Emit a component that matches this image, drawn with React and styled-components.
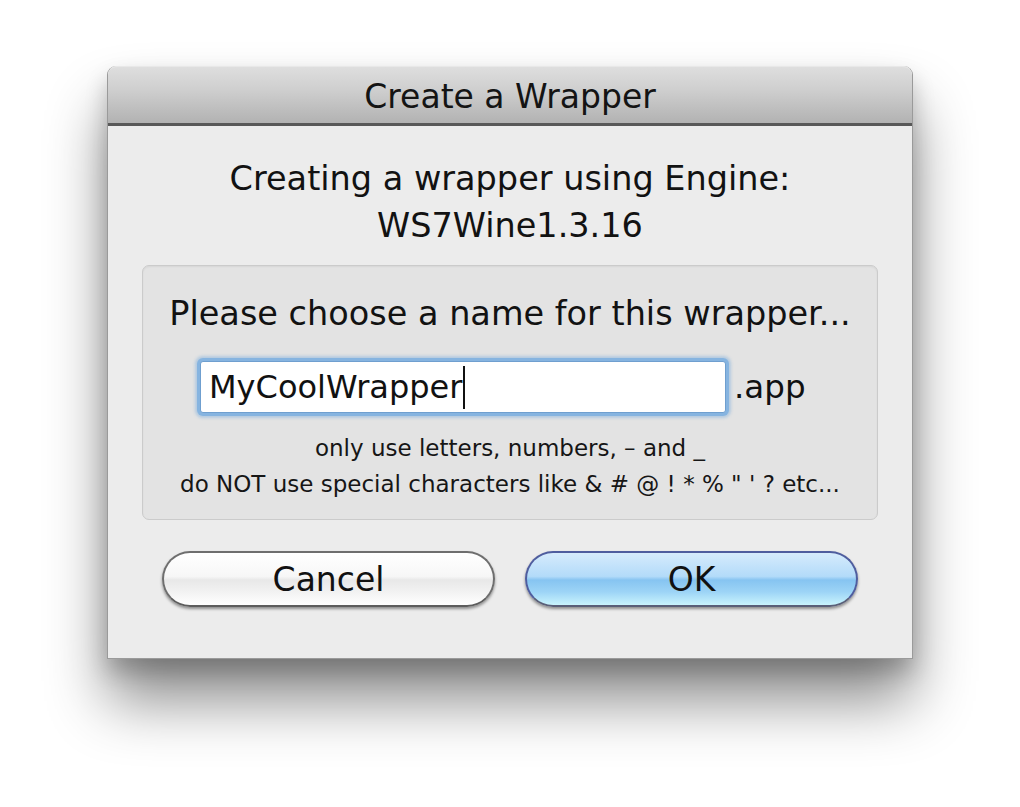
import React from "react";
import styled, { createGlobalStyle } from "styled-components";

const Global = createGlobalStyle`
  html, body { margin: 0; padding: 0; background: #ffffff; }
  body { font-family: "DejaVu Sans", "Noto Sans", sans-serif; color: #111; }
`;

const Stage = styled.div`
  width: 1020px;
  height: 807px;
  padding: 66px 0 0 107px;
  box-sizing: border-box;
  overflow: hidden;
`;

const Window = styled.div`
  width: 806px;
  height: 593px;
  box-sizing: border-box;
  background: #ececec;
  border: 1px solid #9a9a9a;
  border-top: none;
  border-radius: 9px 9px 0 0;
  display: flex;
  flex-direction: column;
  box-shadow: 0 42px 60px rgba(0, 0, 0, 0.45), 0 12px 22px rgba(0, 0, 0, 0.2);
`;

const TitleBar = styled.div`
  height: 54px;
  flex: none;
  display: flex;
  align-items: center;
  justify-content: center;
  border-radius: 9px 9px 0 0;
  border-top: 1px solid #e8e8e8;
  background: linear-gradient(#dedede 0%, #cfcfcf 40%, #b2b2b2 100%);
  border-bottom: 3px solid #585858;
  font-size: 33px;
  padding-top: 2px;
  color: #141414;
`;

const Body = styled.div`
  display: flex;
  flex-direction: column;
  padding: 29px 34px 0;
`;

const Heading = styled.div`
  text-align: center;
  font-size: 33.5px;
  line-height: 47px;
  color: #121212;
`;

const Group = styled.div`
  margin-top: 16px;
  height: 255px;
  box-sizing: border-box;
  background: #e3e3e3;
  border: 1px solid #cbcbcb;
  border-radius: 7px;
  box-shadow: inset 0 1px 2px rgba(0, 0, 0, 0.06);
  padding: 28px 0 0;
  display: flex;
  flex-direction: column;
`;

const Prompt = styled.div`
  text-align: center;
  font-size: 33.5px;
  line-height: 40px;
  color: #121212;
`;

const FieldRow = styled.div`
  margin-top: 27px;
  display: flex;
  align-items: center;
  padding-left: 57px;
`;

const Field = styled.div`
  width: 526px;
  height: 52px;
  box-sizing: border-box;
  background: #ffffff;
  border: 1px solid #6f9fcf;
  box-shadow: 0 0 0 3px #86b4e0, 0 0 3px 5px rgba(120, 170, 220, 0.45);
  border-radius: 3px;
  display: flex;
  align-items: center;
  padding-left: 8px;
  font-size: 32px;
  color: #111;
`;

const Caret = styled.span`
  display: inline-block;
  width: 2px;
  height: 43px;
  background: #111;
  margin-left: 1px;
`;

const Suffix = styled.span`
  margin-left: 8px;
  font-size: 32.5px;
  color: #111;
`;

const Hint = styled.div`
  margin-top: 17px;
  text-align: center;
  font-size: 23px;
  line-height: 36px;
  color: #161616;
`;

const Buttons = styled.div`
  margin-top: 31px;
  display: flex;
  justify-content: space-between;
  padding: 0 20px;
`;

const Button = styled.div`
  width: 333px;
  height: 56px;
  box-sizing: border-box;
  border-radius: 28px;
  display: flex;
  align-items: center;
  justify-content: center;
  font-size: 33px;
  color: #111;
  border: 2px solid ${(p) => (p.$primary ? "#4f5d9e" : "#6e6e6e")};
  border-bottom-color: ${(p) => (p.$primary ? "#5a5f78" : "#5d5d5d")};
  box-shadow: 0 2px 3px rgba(0, 0, 0, 0.4);
  background: ${(p) =>
    p.$primary
      ? "linear-gradient(#d6ebfc 0%, #b3dbf9 45%, #86c4f1 52%, #9dd4f6 75%, #c9f4fd 100%)"
      : "linear-gradient(#ffffff 0%, #f7f7f7 45%, #e8e8e8 52%, #f2f2f2 75%, #ffffff 100%)"};
`;

export default function App() {
  return (
    <>
      <Global />
      <Stage>
        <Window>
          <TitleBar>Create a Wrapper</TitleBar>
          <Body>
            <Heading>
              Creating a wrapper using Engine:
              <br />
              WS7Wine1.3.16
            </Heading>
            <Group>
              <Prompt>Please choose a name for this wrapper...</Prompt>
              <FieldRow>
                <Field>
                  MyCoolWrapper
                  <Caret />
                </Field>
                <Suffix>.app</Suffix>
              </FieldRow>
              <Hint>
                only use letters, numbers, – and _
                <br />
                do NOT use special characters like &amp; # @ ! * % " ' ? etc...
              </Hint>
            </Group>
            <Buttons>
              <Button>Cancel</Button>
              <Button $primary>OK</Button>
            </Buttons>
          </Body>
        </Window>
      </Stage>
    </>
  );
}
